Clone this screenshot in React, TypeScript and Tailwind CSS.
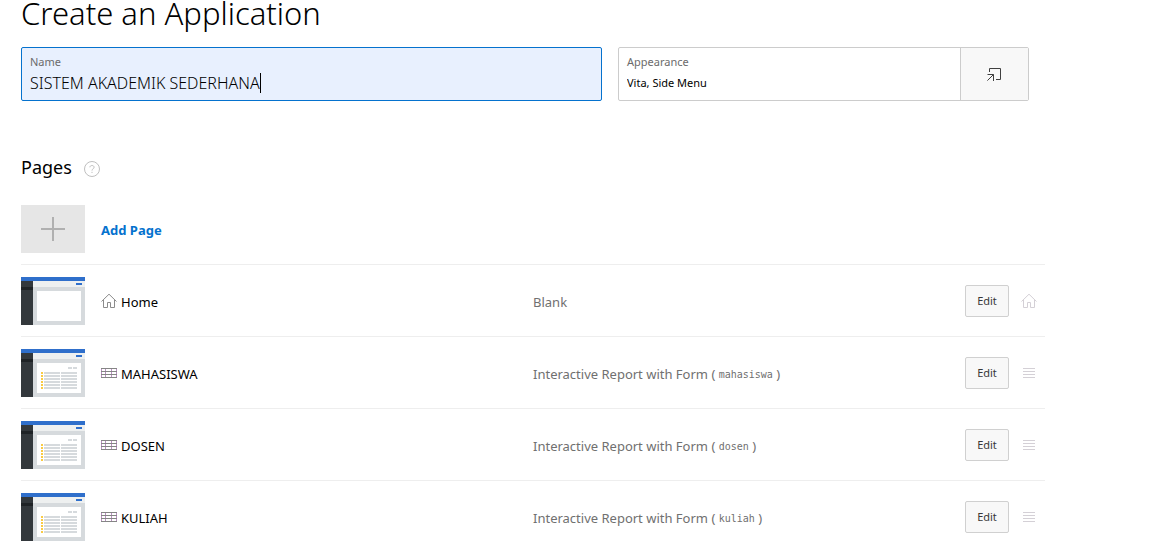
import React from "react";

type IconProps = { className?: string };

type PageRow = {
  name: string;
  kind: "home" | "report";
  type: string;
  table?: string;
};

const pages: PageRow[] = [
  { name: "Home", kind: "home", type: "Blank" },
  { name: "MAHASISWA", kind: "report", type: "Interactive Report with Form", table: "mahasiswa" },
  { name: "DOSEN", kind: "report", type: "Interactive Report with Form", table: "dosen" },
  { name: "KULIAH", kind: "report", type: "Interactive Report with Form", table: "kuliah" },
];

function HomeIcon({ className }: IconProps) {
  return (
    <svg viewBox="0 0 16 16" className={className} fill="none" stroke="currentColor" aria-hidden="true">
      <path d="M0.5 8.5 L8 1.2 L15.5 8.5" />
      <path d="M2.5 7 V14.5 H6.5 V9.5 H9.5 V14.5 H13.5 V7" />
    </svg>
  );
}

function TableIcon({ className }: IconProps) {
  return (
    <svg viewBox="0 0 16 16" className={className} fill="none" aria-hidden="true">
      <path d="M0.5 3V13M4.5 3V13M10.5 3V13M15.5 3V13" stroke="#b88fc0" />
      <path d="M0 3.5H16M0 6.5H16M0 9.5H16M0 12.5H16" stroke="#858585" />
    </svg>
  );
}

function HandleIcon({ className }: IconProps) {
  return (
    <svg viewBox="0 0 16 16" className={className} fill="none" stroke="currentColor" aria-hidden="true">
      <path d="M2 3.5H14M2 6.5H14M2 9.5H14M2 12.5H14" />
    </svg>
  );
}

function PopupIcon({ className }: IconProps) {
  return (
    <svg viewBox="0 0 16 16" className={className} fill="none" stroke="currentColor" aria-hidden="true">
      <path d="M2.5 6V2.5H13.5V13.5H9" />
      <path d="M0.5 8.5H6.5V15M6.5 8.5L0.4 14.6" />
    </svg>
  );
}

function HelpIcon({ className }: IconProps) {
  return (
    <svg viewBox="0 0 16 16" className={className} fill="none" stroke="currentColor" aria-hidden="true">
      <circle cx="8" cy="8" r="7.5" />
      <path d="M5.9 6.3C5.9 3.9 10.1 3.9 10.1 6.3C10.1 7.8 8 7.7 8 9.6M8 10.8V12" />
    </svg>
  );
}

function Thumbnail({ report }: { report: boolean }) {
  return (
    <svg viewBox="0 0 64 48" className="h-12 w-16 shrink-0" shapeRendering="crispEdges" aria-hidden="true">
      <rect width="64" height="48" fill="#d6dadd" />
      <rect x="12" y="4" width="52" height="6" fill="#eef0f0" />
      <rect y="4" width="12" height="44" fill="#33383c" />
      <rect y="10" width="12" height="3" fill="#1f2326" />
      <rect width="64" height="4" fill="#2f6fcb" />
      <rect x="55" y="6" width="6" height="2" fill="#2f6fcb" />
      <rect x="16" y="14" width="44" height="30" fill="#ffffff" />
      {report && (
        <g fill="#d6dadd">
          <rect x="47" y="18" width="4" height="2" />
          <rect x="52" y="18" width="4" height="2" />
          {[23, 26, 29, 32, 35, 38].map((y) => (
            <g key={y}>
              <rect x="20" y={y} width="2" height="2" fill="#f9cb45" />
              <rect x="23" y={y} width="16" height="2" />
              <rect x="40" y={y} width="16" height="2" />
            </g>
          ))}
        </g>
      )}
    </svg>
  );
}

export default function App() {
  return (
    <main className="max-w-[1045px] bg-white pl-[21px] font-['Noto_Sans',sans-serif] text-black">
      <h1 className="h-[47px] text-[31px] leading-[26px] font-light">Create an Application</h1>

      <div className="grid grid-cols-[581fr_411fr] gap-4 pr-4">
        <div className="flex h-[54px] flex-col rounded-xs border border-[#0572ce] bg-[#e8f0fe] px-2">
          <label htmlFor="app-name" className="pt-1 text-[11px] leading-5 text-[#6b6b6b]">
            Name
          </label>
          <div className="flex h-[22px] items-center">
            <input
              id="app-name"
              autoFocus
              defaultValue="SISTEM AKADEMIK SEDERHANA"
              className="field-sizing-content max-w-full bg-transparent text-base leading-5 font-light caret-transparent outline-none"
            />
            <span className="h-5 w-px bg-black" aria-hidden="true" />
          </div>
        </div>
        <div className="flex h-[54px] rounded-xs border border-[#cccccc]">
          <div className="flex min-w-0 grow flex-col px-2">
            <label htmlFor="appearance" className="pt-1 text-[11px] leading-5 text-[#6b6b6b]">
              Appearance
            </label>
            <input
              id="appearance"
              readOnly
              defaultValue="Vita, Side Menu"
              className="h-5 w-full bg-transparent text-[11px] outline-none"
            />
          </div>
          <button
            type="button"
            aria-label="Set Appearance"
            className="flex w-[68px] shrink-0 items-center justify-center border-l border-[#cccccc] bg-[#f8f8f8] text-[#404040]"
          >
            <PopupIcon className="size-4" />
          </button>
        </div>
      </div>

      <section className="pt-[52px]">
        <div className="flex h-10 items-start gap-3">
          <h2 className="text-lg leading-7">Pages</h2>
          <button type="button" aria-label="Help for Pages" className="mt-2 text-[#bfbfbf]">
            <HelpIcon className="size-4" />
          </button>
        </div>

        <div className="flex h-[72px] items-center gap-4 border-b border-[#eeeeee]">
          <span className="flex h-12 w-16 shrink-0 items-center justify-center bg-[#e6e6e6]">
            <svg viewBox="0 0 24 24" className="size-6" stroke="#b0b0b0" strokeWidth="2" aria-hidden="true">
              <path d="M12 0V24M0 12H24" />
            </svg>
          </span>
          <a href="#add-page" className="pt-1 text-[13px] font-bold text-[#0572ce]">
            Add Page
          </a>
        </div>

        <ul>
          {pages.map((page) => (
            <li key={page.name} className="flex h-[72px] items-center border-b border-[#eeeeee] text-[13px]">
              <Thumbnail report={page.kind === "report"} />
              <div className="flex w-[448px] shrink-0 items-center gap-1 pl-4">
                {page.kind === "home" ? (
                  <HomeIcon className="size-4 text-[#8c8c8c]" />
                ) : (
                  <TableIcon className="size-4" />
                )}
                <span className="pt-1">{page.name}</span>
              </div>
              <div className="grow pt-1 text-[#707070]">
                {page.type}
                {page.table && (
                  <>
                    {" ( "}
                    <code className="align-[1px] font-['DejaVu_Sans_Mono',monospace] text-[10px]">{page.table}</code>
                    {" )"}
                  </>
                )}
              </div>
              <button
                type="button"
                className="h-8 w-11 rounded-xs border border-[#d0d0d0] bg-[#f8f8f8] pt-0.5 text-[11px] text-[#383838]"
              >
                Edit
              </button>
              <span className="pr-2 pl-3 text-[#d4d0d6]">
                {page.kind === "home" ? <HomeIcon className="size-4" /> : <HandleIcon className="size-4" />}
              </span>
            </li>
          ))}
        </ul>
      </section>
    </main>
  );
}
